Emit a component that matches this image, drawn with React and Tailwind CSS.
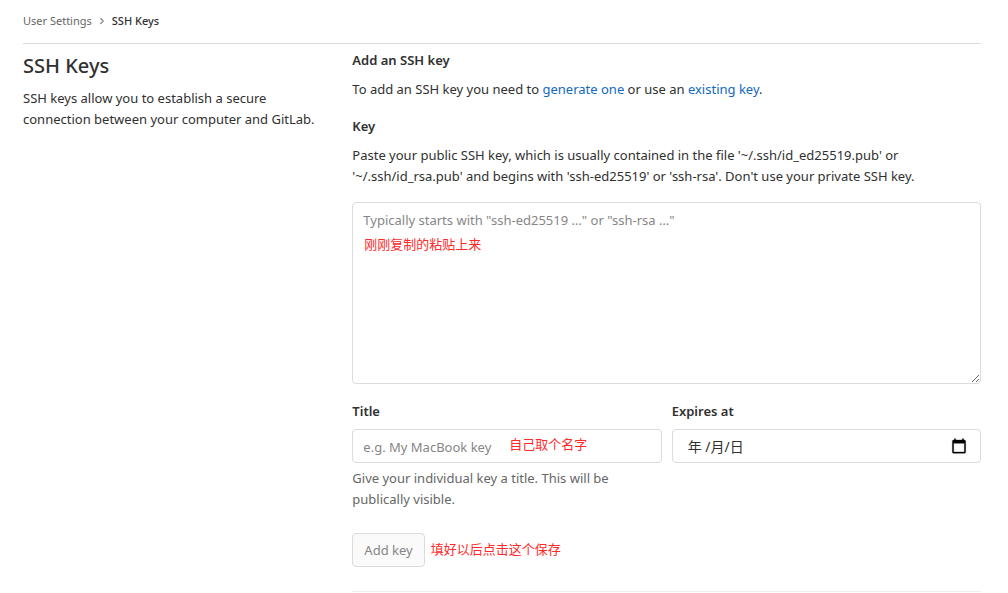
import React from 'react';
import { ChevronRight } from 'lucide-react';

const LABEL = 'block text-[13px] leading-[21px] font-semibold text-[#303030]';
const FIELD = 'block w-full rounded border border-[#dbdbdb] bg-white px-2.5 text-[#303030] outline-none';
const NOTE = "font-['Noto_Sans_CJK_SC',sans-serif] text-[13px] leading-5 whitespace-nowrap text-[#ff2a2a]";

function CalendarIcon() {
  return (
    <svg viewBox="0 0 24 24" className="h-4 w-4" aria-hidden="true">
      <path
        d="M20 3h-1V1h-2v2H7V1H5v2H4c-1.1 0-2 .9-2 2v16c0 1.1.9 2 2 2h16c1.1 0 2-.9 2-2V5c0-1.1-.9-2-2-2zm0 18H4V8h16v13z"
        fill="#000"
        stroke="#000"
        strokeWidth="0.5"
      />
    </svg>
  );
}

function Breadcrumbs() {
  return (
    <nav className="flex h-11 items-center gap-[5px] border-b border-[#dbdbdb] pb-0.5 text-[11px] leading-4">
      <a href="#settings" className="text-[#666]">User Settings</a>
      <ChevronRight className="h-2.5 w-2.5 text-[#888]" strokeWidth={3} />
      <a href="#keys" className="font-medium text-[#303030]">SSH Keys</a>
    </nav>
  );
}

function KeyForm() {
  return (
    <form onSubmit={(e) => e.preventDefault()}>
      <label htmlFor="key" className={LABEL}>Key</label>
      <p className="mt-2">
        Paste your public SSH key, which is usually contained in the file '~/.ssh/id_ed25519.pub' or
        '~/.ssh/id_rsa.pub' and begins with 'ssh-ed25519' or 'ssh-rsa'. Don't use your private SSH key.
      </p>
      <div className="relative mt-[15px]">
        <textarea
          id="key"
          placeholder={'Typically starts with "ssh-ed25519 …" or "ssh-rsa …"'}
          className={`${FIELD} h-[182px] resize py-[7px] placeholder:text-[#868686]`}
        />
        <span className={`${NOTE} absolute top-8 left-3`}>刚刚复制的粘贴上来</span>
      </div>

      <div className="mt-[17px] grid grid-cols-2 gap-2.5">
        <div>
          <label htmlFor="title" className={LABEL}>Title</label>
          <div className="relative mt-[7px]">
            <input
              id="title"
              type="text"
              placeholder="e.g. My MacBook key"
              className={`${FIELD} h-[34px] pt-0.5 placeholder:text-[#868686]`}
            />
            <span className={`${NOTE} absolute top-[5px] left-[157px]`}>自己取个名字</span>
          </div>
          <p className="mt-[5px] text-[#666]">Give your individual key a title. This will be publically visible.</p>
        </div>
        <div>
          <label htmlFor="expires" className={LABEL}>Expires at</label>
          <div className="relative mt-[7px]">
            <input
              id="expires"
              type="text"
              placeholder="年 /月/日"
              className={`${FIELD} h-[34px] pl-[15px] text-sm placeholder:text-[#303030]`}
            />
            <button type="button" aria-label="Choose date" className="absolute top-[9px] right-3.5">
              <CalendarIcon />
            </button>
          </div>
        </div>
      </div>

      <div className="mt-[23px] flex gap-1.5">
        <button type="submit" className="h-[34px] rounded border border-[#dbdbdb] bg-[#fafafa] px-[11px] text-[#868686]">
          Add key
        </button>
        <span className={`${NOTE} pt-1.5`}>填好以后点击这个保存</span>
      </div>
    </form>
  );
}

export default function App() {
  return (
    <div className="bg-white pr-[27px] pl-[23px] font-['Noto_Sans','Noto_Sans_CJK_SC',sans-serif] text-[13px] leading-[21px] text-[#303030]">
      <Breadcrumbs />
      <main className="grid grid-cols-3 gap-[30px]">
        <div>
          <h1 className="mt-2 text-xl leading-7 font-medium">SSH Keys</h1>
          <p className="mt-2">
            SSH keys allow you to establish a secure connection between your computer and GitLab.
          </p>
        </div>
        <div className="col-span-2 border-b border-[#eee] pt-1.5 pb-6">
          <h2 className={LABEL}>Add an SSH key</h2>
          <p className="mt-2 mb-4">
            To add an SSH key you need to <a href="#generate" className="text-[#1068bf]">generate one</a> or use
            an <a href="#existing" className="text-[#1068bf]">existing key</a>.
          </p>
          <KeyForm />
        </div>
      </main>
    </div>
  );
}
